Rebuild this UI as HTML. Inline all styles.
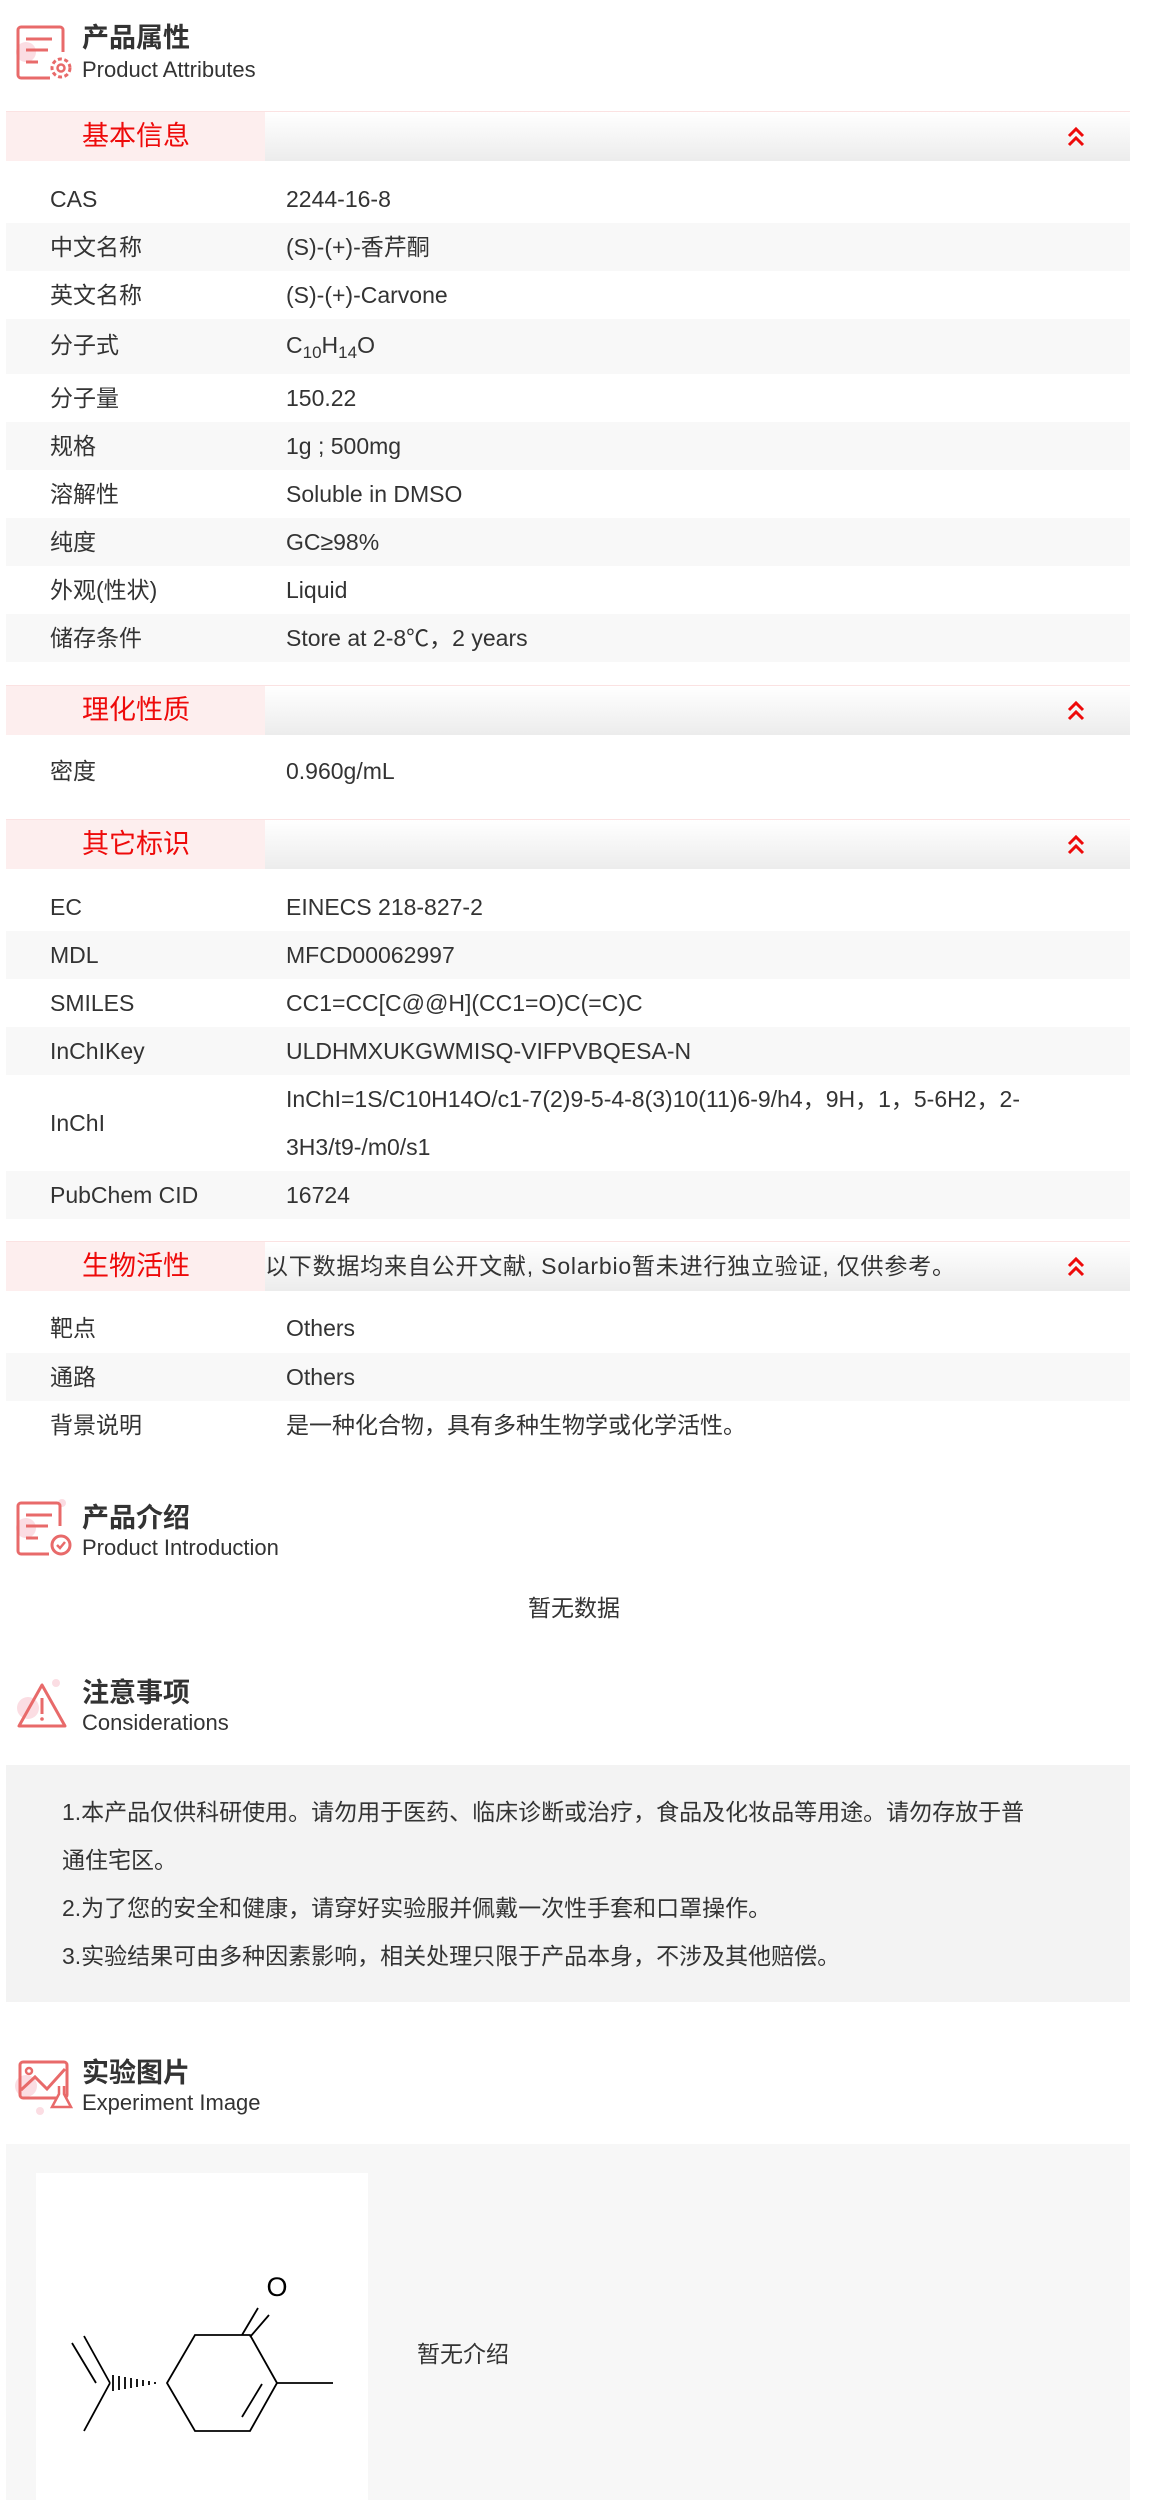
<!DOCTYPE html>
<html><head><meta charset="utf-8"><style>
*{margin:0;padding:0;box-sizing:border-box}
body{width:1152px;height:2500px;background:#fff;position:relative;overflow:hidden;font-family:"Liberation Sans","Noto Sans CJK SC",sans-serif;color:#333}
.a{position:absolute}
.tt{position:absolute;left:82px;font-size:27px;font-weight:bold;color:#333;line-height:32px}
.st{position:absolute;left:82px;font-size:22px;color:#333;line-height:28px}
.hd{position:absolute;left:6px;width:1124px;height:50px;border-top:1px solid #fbe2e2;background:linear-gradient(#fff,#ececec)}
.hd .p{position:absolute;left:0;top:0;width:259px;height:49px;background:#fdeeee}
.hd .t{position:absolute;left:76px;top:0;line-height:48px;font-size:27px;color:#ee0a0a}
.hd svg{position:absolute;left:1061px;top:14px}
.r{position:absolute;left:6px;width:1124px;height:48px;font-size:23px;line-height:48px}
.r.g{background:#f8f8f8}
.r .l{position:absolute;left:44px}
.r .v{position:absolute;left:280px}
sub{font-size:17px;vertical-align:-5px;line-height:0}
</style></head><body>

<svg class="a" style="left:14px;top:22px" width="60" height="62" viewBox="0 0 60 62">
<circle cx="12" cy="30" r="10" fill="#fbdde3"/>
<path d="M20 5h26a3 3 0 0 1 3 3v22M36 56H7a3 3 0 0 1-3-3V8a3 3 0 0 1 3-3h13" fill="none" stroke="#e86a6a" stroke-width="3"/>
<path d="M12 17h26M12 28h22M12 40h12" stroke="#e86a6a" stroke-width="3"/>
<circle cx="47" cy="46" r="9" fill="none" stroke="#e86a6a" stroke-width="3" stroke-dasharray="4 2.5"/>
<circle cx="47" cy="46" r="3.5" fill="none" stroke="#e86a6a" stroke-width="2.5"/>
</svg>
<div class="tt" style="top:22px">产品属性</div>
<div class="st" style="top:56px">Product Attributes</div>

<svg width="0" height="0" style="position:absolute"><defs><g id="chev"><path d="M2 10l7-7 7 7M2 19l7-7 7 7" fill="none" stroke="#ee0a0a" stroke-width="3"/></g></defs></svg>

<div class="hd" style="top:111px"><div class="p"></div><div class="t">基本信息</div><svg width="18" height="22"><use href="#chev"/></svg></div>
<div class="r" style="top:175px"><span class="l">CAS</span><span class="v">2244-16-8</span></div>
<div class="r g" style="top:223px"><span class="l">中文名称</span><span class="v">(S)-(+)-香芹酮</span></div>
<div class="r" style="top:271px"><span class="l">英文名称</span><span class="v">(S)-(+)-Carvone</span></div>
<div class="r g" style="top:319px;height:55px;line-height:52px"><span class="l">分子式</span><span class="v">C<sub>10</sub>H<sub>14</sub>O</span></div>
<div class="r" style="top:374px"><span class="l">分子量</span><span class="v">150.22</span></div>
<div class="r g" style="top:422px"><span class="l">规格</span><span class="v">1g ; 500mg</span></div>
<div class="r" style="top:470px"><span class="l">溶解性</span><span class="v">Soluble in DMSO</span></div>
<div class="r g" style="top:518px"><span class="l">纯度</span><span class="v">GC≥98%</span></div>
<div class="r" style="top:566px"><span class="l">外观(性状)</span><span class="v">Liquid</span></div>
<div class="r g" style="top:614px"><span class="l">储存条件</span><span class="v">Store at 2-8℃，2 years</span></div>

<div class="hd" style="top:685px"><div class="p"></div><div class="t">理化性质</div><svg width="18" height="22"><use href="#chev"/></svg></div>
<div class="r" style="top:747px"><span class="l">密度</span><span class="v">0.960g/mL</span></div>

<div class="hd" style="top:819px"><div class="p"></div><div class="t">其它标识</div><svg width="18" height="22"><use href="#chev"/></svg></div>
<div class="r" style="top:883px"><span class="l">EC</span><span class="v">EINECS 218-827-2</span></div>
<div class="r g" style="top:931px"><span class="l">MDL</span><span class="v">MFCD00062997</span></div>
<div class="r" style="top:979px"><span class="l">SMILES</span><span class="v">CC1=CC[C@@H](CC1=O)C(=C)C</span></div>
<div class="r g" style="top:1027px"><span class="l">InChIKey</span><span class="v">ULDHMXUKGWMISQ-VIFPVBQESA-N</span></div>
<div class="r" style="top:1075px;height:96px"><span class="l" style="top:24px">InChI</span><span class="v" style="width:800px">InChI=1S/C10H14O/c1-7(2)9-5-4-8(3)10(11)6-9/h4，9H，1，5-6H2，2-<br>3H3/t9-/m0/s1</span></div>
<div class="r g" style="top:1171px"><span class="l">PubChem CID</span><span class="v">16724</span></div>

<div class="hd" style="top:1241px"><div class="p"></div><div class="t">生物活性</div><div class="a" style="left:259px;top:0;line-height:48px;font-size:23px;color:#333;letter-spacing:0.8px;white-space:nowrap">以下数据均来自公开文献, Solarbio暂未进行独立验证, 仅供参考。</div><svg width="18" height="22"><use href="#chev"/></svg></div>
<div class="r" style="top:1304px"><span class="l">靶点</span><span class="v">Others</span></div>
<div class="r g" style="top:1353px"><span class="l">通路</span><span class="v">Others</span></div>
<div class="r" style="top:1401px"><span class="l">背景说明</span><span class="v">是一种化合物，具有多种生物学或化学活性。</span></div>

<svg class="a" style="left:14px;top:1498px" width="60" height="62" viewBox="0 0 60 62">
<circle cx="12" cy="30" r="10" fill="#fbdde3"/><circle cx="48" cy="5" r="4" fill="#fbdde3"/>
<path d="M46 28V8a3 3 0 0 0-3-3H7a3 3 0 0 0-3 3v45a3 3 0 0 0 3 3h28" fill="none" stroke="#e86a6a" stroke-width="3"/>
<path d="M12 17h26M12 28h22M12 40h12" stroke="#e86a6a" stroke-width="3"/>
<circle cx="47" cy="47" r="9" fill="none" stroke="#e86a6a" stroke-width="3"/>
<path d="M43 47l3 3 5-6" fill="none" stroke="#e86a6a" stroke-width="2.5"/>
</svg>
<div class="tt" style="top:1502px">产品介绍</div>
<div class="st" style="top:1534px">Product Introduction</div>
<div class="a" style="left:528px;top:1594px;font-size:23px;line-height:28px">暂无数据</div>

<svg class="a" style="left:14px;top:1678px" width="60" height="56" viewBox="0 0 60 56">
<circle cx="14" cy="30" r="11" fill="#fbdde3"/><circle cx="42" cy="5" r="4" fill="#fbdde3"/>
<path d="M28 7L5 48h46z" fill="none" stroke="#e86a6a" stroke-width="3" stroke-linejoin="round"/>
<path d="M28 20v16" stroke="#e86a6a" stroke-width="3"/><circle cx="28" cy="41" r="1.8" fill="#e86a6a"/>
</svg>
<div class="tt" style="top:1677px">注意事项</div>
<div class="st" style="top:1709px">Considerations</div>
<div class="a" style="left:6px;top:1765px;width:1124px;height:237px;background:#f3f3f3"></div>
<div class="a" style="left:62px;top:1788px;font-size:23px;line-height:48px;width:970px">1.本产品仅供科研使用。请勿用于医药、临床诊断或治疗，食品及化妆品等用途。请勿存放于普通住宅区。<br>2.为了您的安全和健康，请穿好实验服并佩戴一次性手套和口罩操作。<br>3.实验结果可由多种因素影响，相关处理只限于产品本身，不涉及其他赔偿。</div>

<svg class="a" style="left:12px;top:2056px" width="62" height="62" viewBox="0 0 62 62">
<circle cx="14" cy="30" r="11" fill="#fbdde3"/><circle cx="28" cy="55" r="4" fill="#fbdde3"/>
<rect x="8" y="6" width="47" height="36" rx="3" fill="none" stroke="#e86a6a" stroke-width="3"/>
<circle cx="17" cy="15" r="3" fill="none" stroke="#e86a6a" stroke-width="2.5"/>
<path d="M9 34l14-13 12 12 18-20" fill="none" stroke="#e86a6a" stroke-width="3"/>
<path d="M52 30v8l7 13H40l7-13v-8" fill="#fff" stroke="#e86a6a" stroke-width="2.5"/>
</svg>
<div class="tt" style="top:2057px">实验图片</div>
<div class="st" style="top:2089px">Experiment Image</div>
<div class="a" style="left:6px;top:2144px;width:1124px;height:356px;background:#f7f7f7"></div>
<div class="a" style="left:36px;top:2173px;width:332px;height:327px;background:#fff"></div>
<svg class="a" style="left:0;top:0;overflow:visible" width="1" height="1">
<g stroke="#000" stroke-width="1.8" fill="none">
<path d="M250 2335L195 2335L167 2383L195 2431L250 2431L277 2383Z"/>
<path d="M277 2383L333 2383"/>
<path d="M262 2384L242 2417"/>
<path d="M258 2308L242 2335M269 2315L250 2337"/>
<path d="M110 2383L84 2431M72 2343L96 2383M84 2336L110 2383"/>
</g>
<g stroke="#000" stroke-width="1.8">
<path d="M113 2375v16M119 2376v14M125 2377v12M131 2378v10M137 2379v8M143 2380v6M149 2381v4M155 2382v2"/>
</g>
<text x="277" y="2296" font-family="Liberation Sans,sans-serif" font-size="27" text-anchor="middle">O</text>
</svg>
<div class="a" style="left:417px;top:2340px;font-size:23px;line-height:28px">暂无介绍</div>
</body></html>
